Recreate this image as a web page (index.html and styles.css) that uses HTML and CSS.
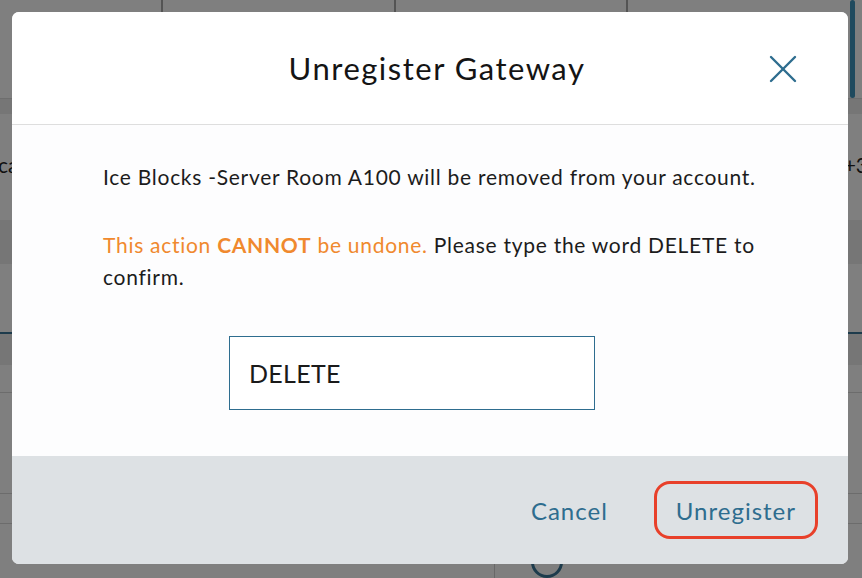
FILE: index.html
```html
<!DOCTYPE html>
<html lang="en">
<head>
<meta charset="utf-8">
<title>Unregister Gateway</title>
<link rel="stylesheet" href="styles.css">
</head>
<body>
<div class="page">
  <div class="top-row">
    <div class="cell"></div>
    <div class="cell"></div>
    <div class="cell"></div>
    <div class="cell"></div>
  </div>
  <div class="row row-head"></div>
  <div class="row row-text"><span class="side-text">ca</span><span class="side-text">+3</span></div>
  <div class="row row-band"></div>
  <div class="row row-plain"></div>
  <div class="row row-tab"></div>
  <div class="row row-plain2"></div>
  <div class="row row-list"></div>
  <div class="row row-list2"></div>
  <div class="bottom-row">
    <div class="picture">
      <span class="stroke s1"></span>
      <span class="stroke s2"></span>
      <span class="stroke s3"></span>
      <span class="stroke s4"></span>
    </div>
    <div class="info"><span class="ring"></span></div>
  </div>
  <div class="scrollbar"></div>
</div>

<div class="backdrop">
  <div class="modal" role="dialog" aria-labelledby="modal-title">
    <div class="modal-header">
      <h2 id="modal-title" class="modal-title">Unregister Gateway</h2>
      <button class="close-btn" aria-label="Close">
        <svg width="28" height="28" viewBox="0 0 28 28" fill="none" stroke="currentColor" stroke-width="2.4" stroke-linecap="round">
          <path d="M2 2 L26 26"/>
          <path d="M26 2 L2 26"/>
        </svg>
      </button>
    </div>
    <div class="modal-body">
      <p class="msg">Ice Blocks -Server Room A100 will be removed from your account.</p>
      <p class="msg"><span class="warn">This action <strong>CANNOT</strong> be undone.</span> Please type the word DELETE to confirm.</p>
      <input class="confirm-input" type="text" value="DELETE">
    </div>
    <div class="modal-footer">
      <button class="btn">Cancel</button>
      <button class="btn btn-focus">Unregister</button>
    </div>
  </div>
</div>
</body>
</html>
```

FILE: styles.css
```css
html, body {
  margin: 0;
  padding: 0;
  height: 100%;
  overflow: hidden;
}

body {
  font-family: "Lato", "Noto Sans", sans-serif;
  background: #ffffff;
}

/* ---------- underlying page (dimmed) ---------- */
.page {
  position: relative;
  height: 578px;
  display: flex;
  flex-direction: column;
}

.top-row {
  height: 100px;
  display: grid;
  grid-template-columns: 163px 233px 232px 1fr;
  border-bottom: 1px solid #dcdcdc;
}

.top-row .cell {
  border-right: 2px solid #a8a8a8;
  height: 18px;
}

.top-row .cell:last-child {
  border-right: none;
}

.row-head {
  height: 15px;
  background: #ededed;
}

.row-text {
  height: 108px;
  display: flex;
  justify-content: space-between;
  align-items: center;
  padding-bottom: 6px;
  box-sizing: border-box;
}

.side-text {
  font-size: 21px;
  color: #222;
  margin-left: -2px;
}

.side-text:last-child {
  margin-right: -6px;
}

.row-band {
  height: 45px;
  background: #ececec;
}

.row-plain {
  height: 69px;
}

.row-tab {
  height: 31px;
  background: #ececec;
  border-top: 2px solid #3a7798;
}

.row-plain2 {
  height: 28px;
  border-bottom: 1px solid #d8d8d8;
}

.row-list {
  height: 102px;
  border-bottom: 1px solid #d8d8d8;
}

.row-list2 {
  height: 29px;
  border-bottom: 1px solid #d8d8d8;
}

.bottom-row {
  flex: 1;
  display: grid;
  grid-template-columns: 495px 1fr;
}

.picture {
  border-right: 1px solid #d0d0d0;
  position: relative;
  overflow: hidden;
}

.stroke {
  position: absolute;
  top: 0;
  width: 10px;
  height: 40px;
  background: #555;
  transform: skewX(-18deg);
}

.s1 { left: 150px; width: 6px; background: #777; }
.s2 { left: 222px; width: 20px; background: #444; }
.s3 { left: 300px; width: 5px; background: #888; transform: skewX(40deg); }
.s4 { left: 425px; width: 22px; background: #3a3a3a; }

.info {
  padding: 22px 0 0 36px;
}

.ring {
  display: block;
  width: 26px;
  height: 26px;
  border: 3px solid #3a7798;
  border-radius: 50%;
}

.scrollbar {
  position: absolute;
  top: 0;
  left: 850px;
  width: 5px;
  height: 98px;
  background: #3e94bc;
  border-radius: 3px;
}

/* ---------- backdrop + modal ---------- */
.backdrop {
  position: fixed;
  inset: 0;
  background: rgba(0, 0, 0, 0.5);
  display: flex;
  align-items: center;
  justify-content: center;
}

.modal {
  width: 836px;
  height: 552px;
  background: #fdfdfe;
  border-radius: 7px;
  overflow: hidden;
  display: flex;
  flex-direction: column;
  margin: -2px 0 0 -2px;
}

.modal-header {
  height: 113px;
  box-sizing: border-box;
  border-bottom: 1px solid #dedede;
  display: flex;
  align-items: center;
  justify-content: center;
  position: relative;
  background: #ffffff;
}

.modal-title {
  margin: 0;
  font-size: 31px;
  font-weight: 400;
  color: #141414;
  letter-spacing: 1.5px;
  line-height: 40px;
  padding: 0 0 0 14px;
}

.close-btn {
  position: absolute;
  right: 51px;
  top: 43px;
  width: 28px;
  height: 28px;
  padding: 0;
  border: none;
  background: none;
  color: #2e6d8f;
  cursor: pointer;
}

.close-btn svg {
  display: block;
}

.modal-body {
  flex: 1;
  padding: 36px 91px 0;
}

.msg {
  margin: 0 0 36px;
  font-size: 21px;
  letter-spacing: 0.72px;
  line-height: 32px;
  color: #1c1c1c;
}

.msg + .msg {
  margin-bottom: 0;
}

.warn {
  color: #f0892e;
}

.warn strong {
  font-weight: 700;
}

.confirm-input {
  display: block;
  margin: 43px 0 0 126px;
  width: 366px;
  height: 74px;
  box-sizing: border-box;
  border: 1px solid #2e6d8f;
  border-radius: 0;
  padding: 0 19px;
  font-family: "Lato", "Noto Sans", sans-serif;
  font-size: 25px;
  letter-spacing: 0.3px;
  color: #1a1a1a;
  background: #ffffff;
  outline: none;
}

.modal-footer {
  height: 108px;
  background: #dde1e4;
  display: flex;
  align-items: center;
  justify-content: flex-end;
  gap: 24px;
  padding: 0 30px 0 0;
  box-sizing: border-box;
}

.btn {
  font-family: "Lato", "Noto Sans", sans-serif;
  font-size: 24px;
  letter-spacing: 1px;
  color: #2e6d8f;
  background: none;
  border: 3px solid transparent;
  border-radius: 16px;
  height: 58px;
  padding: 0 19px;
  cursor: pointer;
}

.btn-focus {
  border-color: #e8402a;
}
```
